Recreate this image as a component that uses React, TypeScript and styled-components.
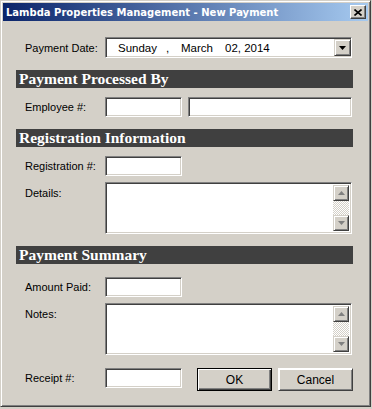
import React from 'react';
import styled, { createGlobalStyle } from 'styled-components';

const GlobalStyle = createGlobalStyle`
    html, body {
        margin: 0;
        padding: 0;
        background: #d4d0c8;
    }
    * {
        box-sizing: border-box;
    }
`;

const Window = styled.div`
    width: 371px;
    height: 407px;
    background: #d4d0c8;
    border: 1px solid;
    border-color: #d4d0c8 #404040 #404040 #d4d0c8;
    box-shadow: inset 1px 1px #ffffff, inset -1px -1px #808080;
    padding: 2px;
    font-family: 'Liberation Sans', Arial, sans-serif;
    font-size: 11px;
    color: #000;
`;

const TitleBar = styled.div`
    height: 18px;
    display: flex;
    align-items: center;
    justify-content: space-between;
    padding: 0 2px 0 3px;
    background: linear-gradient(to right, #0a246a, #a6caf0);
`;

const Title = styled.span`
    color: #fff;
    font-family: 'DejaVu Sans', Verdana, sans-serif;
    font-weight: bold;
    font-size: 10px;
`;

const CloseButton = styled.div`
    width: 16px;
    height: 14px;
    background: #d4d0c8;
    border: 1px solid;
    border-color: #ffffff #404040 #404040 #ffffff;
    box-shadow: inset -1px -1px #808080;
    display: flex;
    align-items: center;
    justify-content: center;
`;

const Content = styled.div`
    padding: 0 15px 0 13px;
`;

const Row = styled.div<{ $top: number; $align?: string }>`
    display: flex;
    align-items: ${(p) => p.$align || 'center'};
    margin-top: ${(p) => p.$top}px;
`;

const Label = styled.div<{ $pad?: number }>`
    width: 89px;
    padding-left: 9px;
    padding-top: ${(p) => p.$pad || 0}px;
    white-space: nowrap;
`;

const sunken = `
    background: #fff;
    border: 1px solid;
    border-color: #808080 #ffffff #ffffff #808080;
    box-shadow: inset 1px 1px #404040, inset -1px -1px #d4d0c8;
`;

const TextBox = styled.div<{ $w: number }>`
    ${sunken}
    width: ${(p) => p.$w}px;
    height: 20px;
`;

const Gap = styled.div<{ $w: number }>`
    width: ${(p) => p.$w}px;
    flex: none;
`;

const DateBox = styled.div`
    ${sunken}
    width: 247px;
    height: 21px;
    display: flex;
    align-items: center;
    padding: 2px 0 2px 12px;
`;

const DateSeg = styled.span<{ $w?: number }>`
    width: ${(p) => (p.$w ? `${p.$w}px` : 'auto')};
    flex: ${(p) => (p.$w ? 'none' : '1')};
    font-size: 11.5px;
`;

const DropButton = styled.div`
    width: 17px;
    height: 17px;
    background: #d4d0c8;
    border: 1px solid;
    border-color: #d4d0c8 #404040 #404040 #d4d0c8;
    box-shadow: inset 1px 1px #ffffff, inset -1px -1px #808080;
    display: flex;
    align-items: center;
    justify-content: center;
`;

const SectionHeader = styled.div<{ $top: number }>`
    margin-top: ${(p) => p.$top}px;
    height: 18px;
    width: 337px;
    background: #404040;
    color: #fff;
    font-family: 'Liberation Serif', 'Times New Roman', serif;
    font-weight: bold;
    font-size: 15.5px;
    line-height: 18px;
    padding-left: 3px;
    white-space: nowrap;
`;

const Memo = styled.div`
    ${sunken}
    width: 247px;
    height: 52px;
    display: flex;
    justify-content: flex-end;
    padding: 2px;
`;

const ScrollBar = styled.div`
    width: 16px;
    display: flex;
    flex-direction: column;
    justify-content: space-between;
    background-color: #ffffff;
    background-image: conic-gradient(#d4d0c8 25%, #ffffff 0 50%, #d4d0c8 0 75%, #ffffff 0);
    background-size: 2px 2px;
`;

const ScrollArrow = styled.div`
    width: 16px;
    height: 16px;
    background: #d4d0c8;
    border: 1px solid;
    border-color: #d4d0c8 #404040 #404040 #d4d0c8;
    box-shadow: inset 1px 1px #ffffff, inset -1px -1px #808080;
    display: flex;
    align-items: center;
    justify-content: center;
`;

const Button = styled.div<{ $default?: boolean }>`
    width: 75px;
    height: 23px;
    display: flex;
    align-items: center;
    justify-content: center;
    background: #d4d0c8;
    font-size: 12px;
    border: 1px solid ${(p) => (p.$default ? '#000000' : '#d4d0c8')};
    box-shadow: ${(p) =>
        p.$default
            ? 'inset 1px 1px #ffffff, inset -1px -1px #404040, inset -2px -2px #808080'
            : 'inset 1px 1px #ffffff, inset -1px -1px #808080'};
    ${(p) => (p.$default ? '' : 'border-color: #ffffff #404040 #404040 #ffffff;')}
`;

const Triangle = ({ dir, color }: { dir: 'up' | 'down'; color: string }) => (
    <svg width="7" height="4" viewBox="0 0 7 4">
        {dir === 'down' ? (
            <polygon points="0,0 7,0 3.5,4" fill={color} />
        ) : (
            <polygon points="3.5,0 7,4 0,4" fill={color} />
        )}
    </svg>
);

const MemoField = () => (
    <Memo>
        <ScrollBar>
            <ScrollArrow>
                <Triangle dir="up" color="#808080" />
            </ScrollArrow>
            <ScrollArrow>
                <Triangle dir="down" color="#808080" />
            </ScrollArrow>
        </ScrollBar>
    </Memo>
);

const App: React.FC = (): JSX.Element => {
    return (
        <>
            <GlobalStyle />
            <Window>
                <TitleBar>
                    <Title>Lambda Properties Management - New Payment</Title>
                    <CloseButton>
                        <svg width="8" height="7" viewBox="0 0 8 7">
                            <path d="M0.5 0.5 L7.5 6.5 M7.5 0.5 L0.5 6.5" stroke="#000" strokeWidth="1.6" />
                        </svg>
                    </CloseButton>
                </TitleBar>
                <Content>
                    <Row $top={16}>
                        <Label>Payment Date:</Label>
                        <DateBox>
                            <DateSeg $w={48}>Sunday</DateSeg>
                            <DateSeg $w={15}>,</DateSeg>
                            <DateSeg $w={44}>March</DateSeg>
                            <DateSeg>02, 2014</DateSeg>
                            <DropButton>
                                <Triangle dir="down" color="#000" />
                            </DropButton>
                        </DateBox>
                    </Row>

                    <SectionHeader $top={12}>Payment Processed By</SectionHeader>
                    <Row $top={9}>
                        <Label>Employee #:</Label>
                        <TextBox $w={77} />
                        <Gap $w={6} />
                        <TextBox $w={164} />
                    </Row>

                    <SectionHeader $top={12}>Registration Information</SectionHeader>
                    <Row $top={9}>
                        <Label>Registration #:</Label>
                        <TextBox $w={77} />
                    </Row>
                    <Row $top={6} $align="flex-start">
                        <Label $pad={5}>Details:</Label>
                        <MemoField />
                    </Row>

                    <SectionHeader $top={12}>Payment Summary</SectionHeader>
                    <Row $top={13}>
                        <Label>Amount Paid:</Label>
                        <TextBox $w={77} />
                    </Row>
                    <Row $top={6} $align="flex-start">
                        <Label $pad={5}>Notes:</Label>
                        <MemoField />
                    </Row>

                    <Row $top={13} $align="flex-start">
                        <Label $pad={4}>Receipt #:</Label>
                        <TextBox $w={77} />
                        <Gap $w={15} />
                        <Button $default>OK</Button>
                        <Gap $w={6} />
                        <Button>Cancel</Button>
                    </Row>
                </Content>
            </Window>
        </>
    );
};

export default App;
